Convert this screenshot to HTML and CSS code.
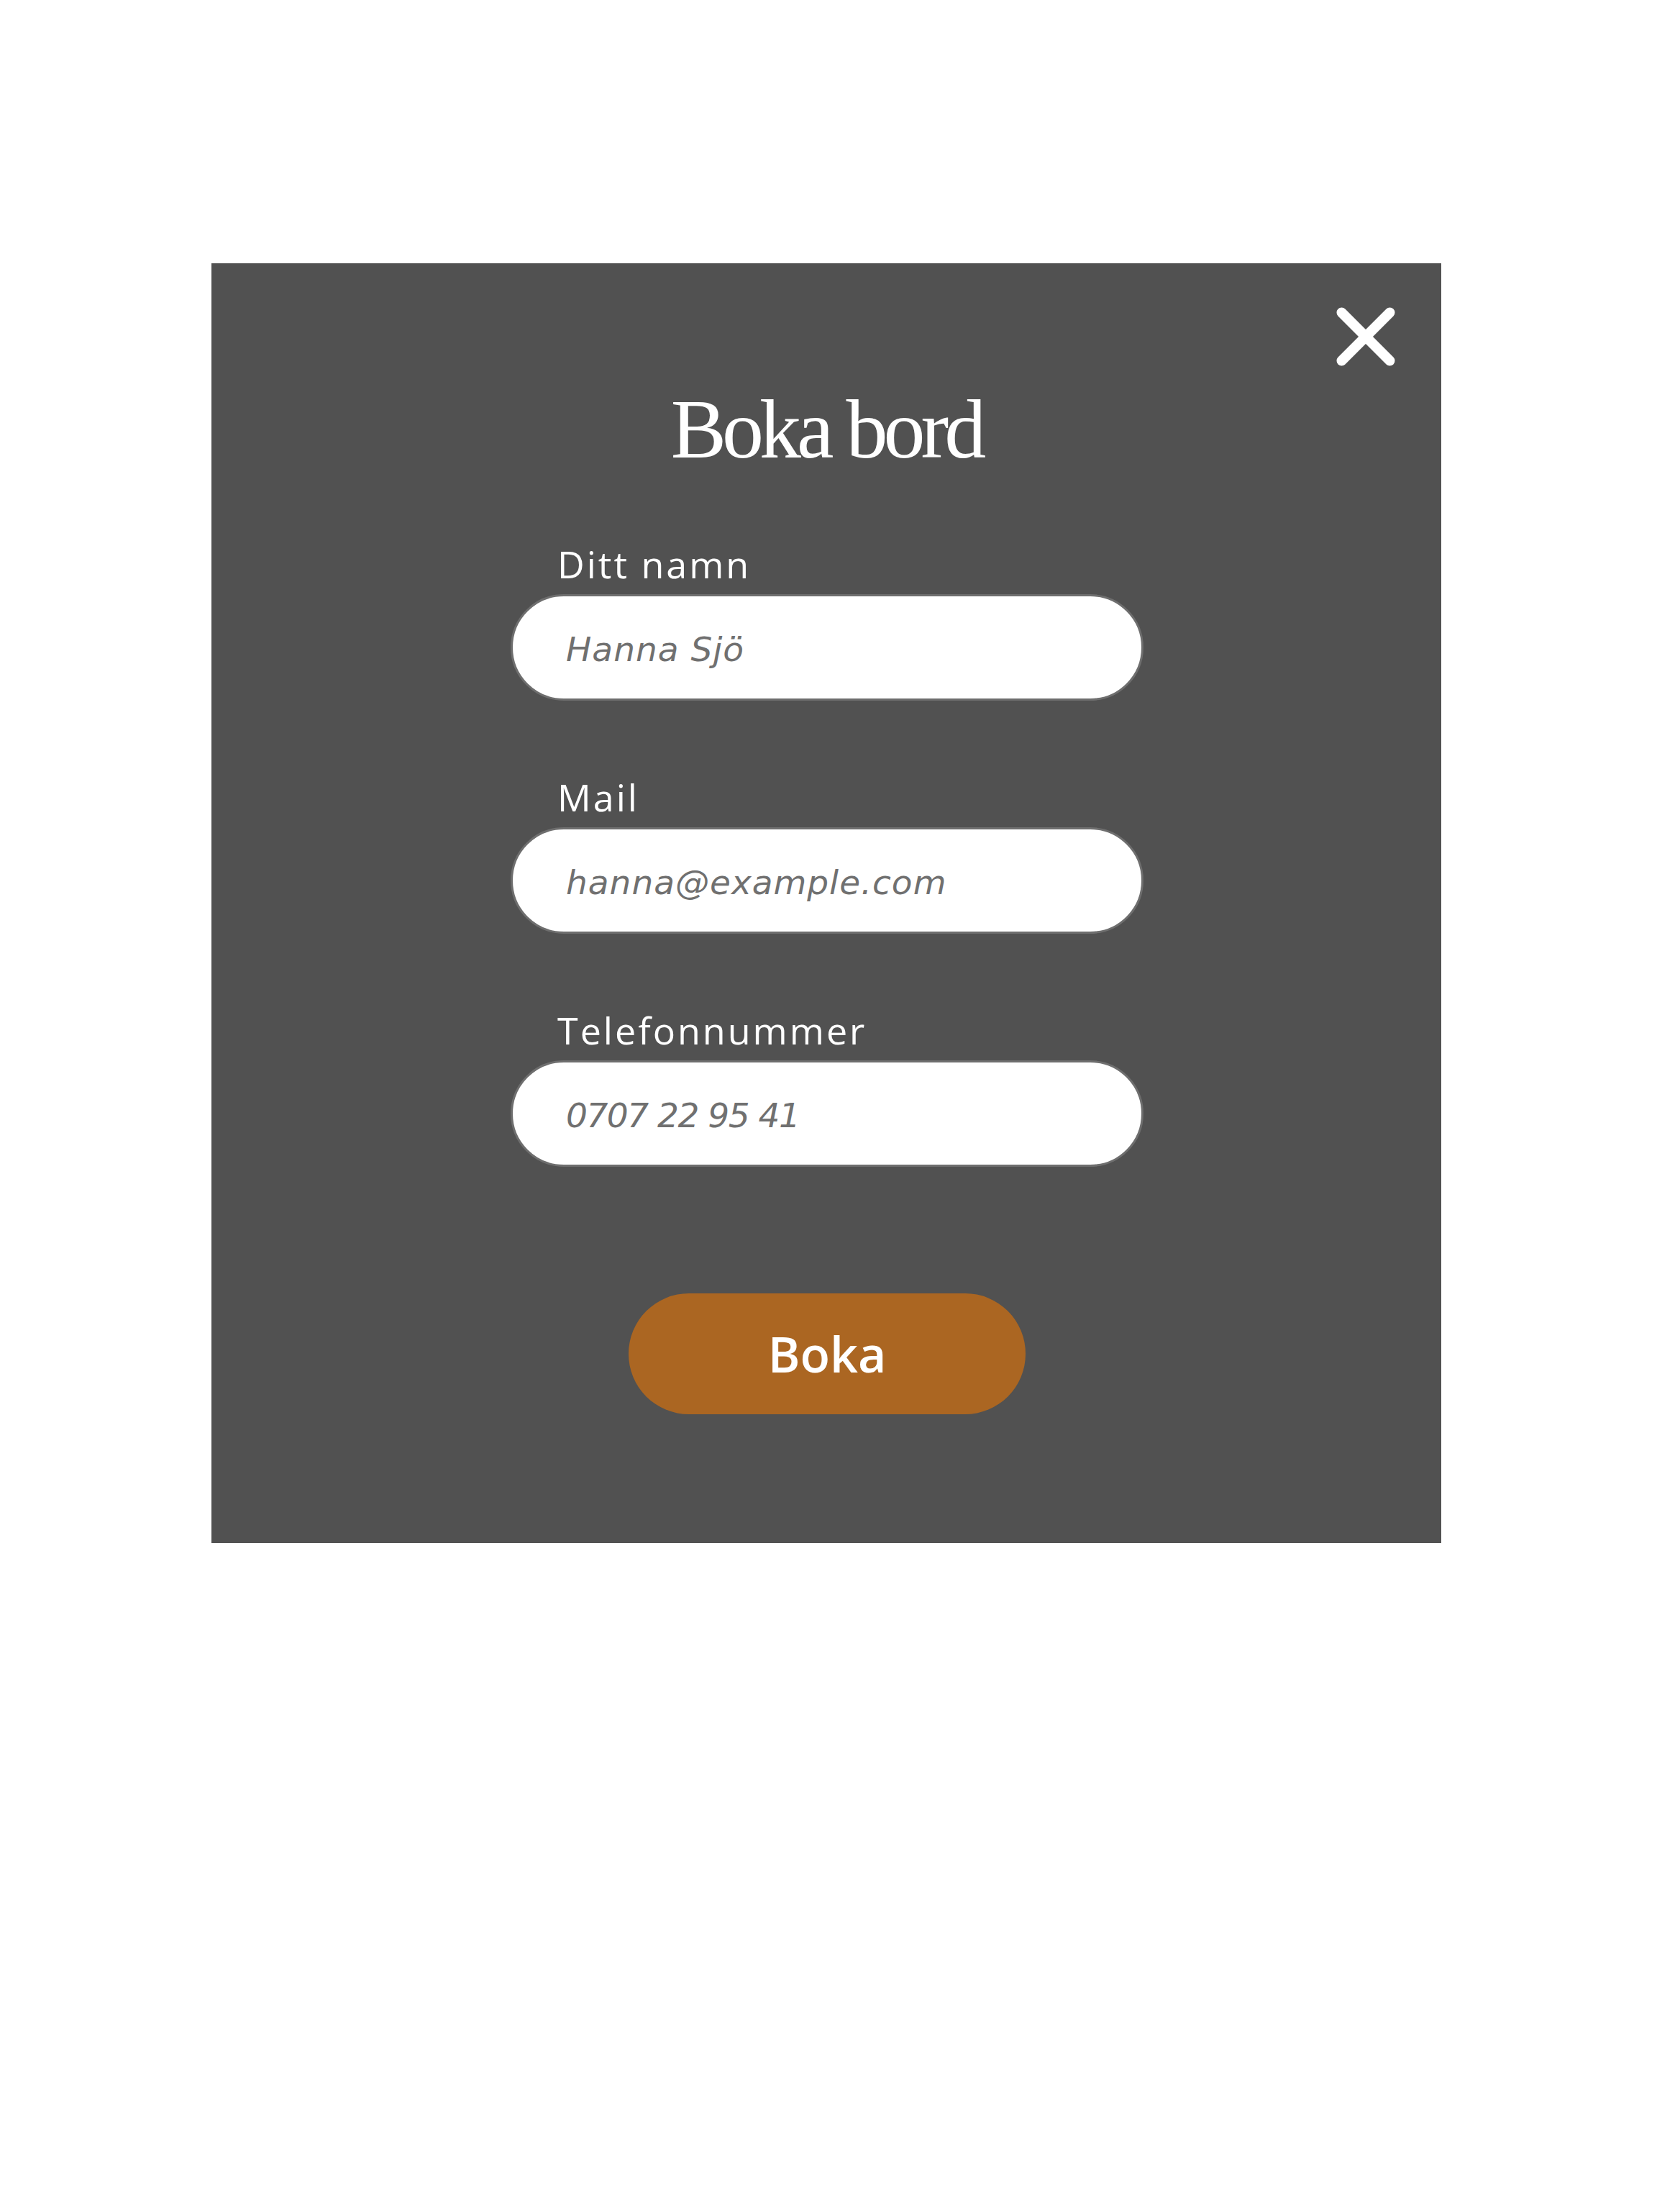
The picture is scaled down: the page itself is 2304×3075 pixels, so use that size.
FILE: index.html
```html
<!DOCTYPE html>
<html lang="sv">
<head>
<meta charset="utf-8">
<title>Boka bord</title>
<link rel="stylesheet" href="styles.css">
</head>
<body>
<div class="modal">
  <button class="close" aria-label="Stäng">
    <svg width="82" height="82" viewBox="0 0 82 82"><path d="M7.5 7.5 L74.5 74.5 M74.5 7.5 L7.5 74.5" stroke="#fff" stroke-width="14" stroke-linecap="round" fill="none"/></svg>
  </button>
  <h1 class="title">Boka bord</h1>
  <form class="form">
    <div class="field">
      <label class="label" for="namn">Ditt namn</label>
      <input class="input" id="namn" type="text" placeholder="Hanna Sjö">
    </div>
    <div class="field">
      <label class="label" for="mail">Mail</label>
      <input class="input" id="mail" type="email" placeholder="hanna@example.com">
    </div>
    <div class="field">
      <label class="label" for="tel">Telefonnummer</label>
      <input class="input input-tel" id="tel" type="tel" placeholder="0707 22 95 41">
    </div>
    <button class="submit" type="button">Boka</button>
  </form>
</div>
</body>
</html>
```

FILE: styles.css
```css
html, body {
  margin: 0;
  padding: 0;
  background: #ffffff;
}
body {
  padding-top: 366px;
  padding-left: 294px;
  min-height: 3075px;
  box-sizing: border-box;
}
.modal {
  position: relative;
  width: 1710px;
  height: 1779px;
  background: #515151;
  box-sizing: border-box;
  padding-top: 173px;
  display: flex;
  flex-direction: column;
  align-items: center;
}
.close {
  position: absolute;
  top: 61px;
  right: 64px;
  width: 82px;
  height: 82px;
  padding: 0;
  border: 0;
  background: transparent;
  display: block;
}
.close svg { display: block; }
.title {
  margin: 0;
  font-family: "Liberation Serif", "DejaVu Serif", serif;
  font-weight: 400;
  font-size: 116px;
  line-height: 116px;
  letter-spacing: -6px;
  color: #ffffff;
  height: 116px;
}
.form {
  margin-top: 99px;
  margin-left: 2px;
  width: 880px;
  display: flex;
  flex-direction: column;
  align-items: center;
  gap: 104px;
}
.field {
  width: 100%;
  display: flex;
  flex-direction: column;
  gap: 12px;
}
.label {
  font-family: "Open Sans", "Noto Sans", sans-serif;
  font-size: 52px;
  line-height: 60px;
  letter-spacing: 3px;
  color: #ffffff;
  padding-left: 65px;
}
.input {
  box-sizing: border-box;
  width: 880px;
  height: 148px;
  border: 3px solid #6e6e6e;
  border-radius: 74px;
  background: #ffffff;
  padding: 4px 40px 0 74px;
  font-family: "DejaVu Sans", "Open Sans", sans-serif;
  font-style: italic;
  font-size: 47px;
  letter-spacing: 1px;
  color: #333;
  outline: none;
  margin: 0;
}
.input-tel {
  letter-spacing: -1.5px;
}
.input::placeholder {
  color: #707070;
  font-style: italic;
  opacity: 1;
}
.submit {
  margin-top: 72px;
  width: 552px;
  height: 168px;
  border: 0;
  border-radius: 84px;
  background: #ab6622;
  color: #ffffff;
  font-family: "Open Sans", "Noto Sans", sans-serif;
  font-weight: 600;
  font-size: 68px;
  line-height: 1;
  padding: 0;
}
```
